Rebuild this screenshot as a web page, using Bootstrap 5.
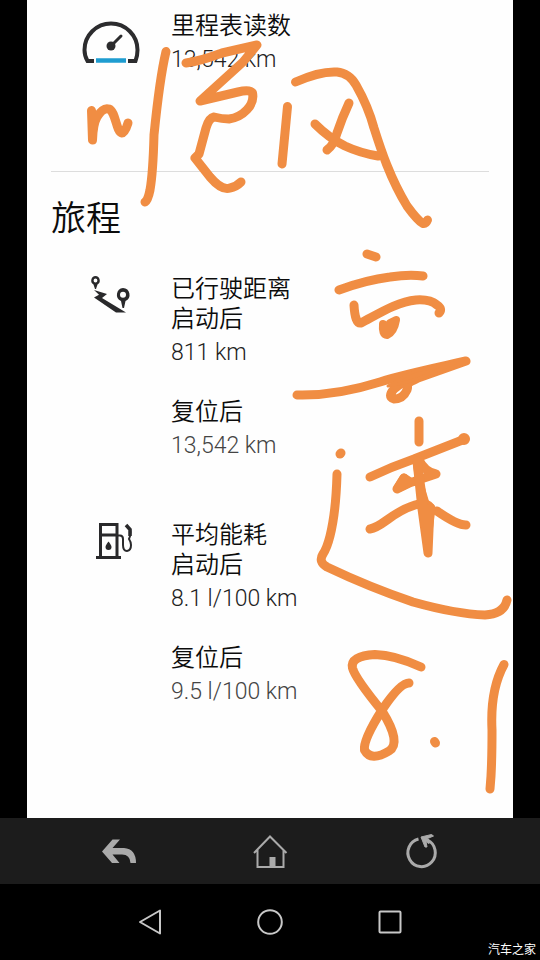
<!DOCTYPE html>
<html lang="zh-CN">
<head>
<meta charset="utf-8">
<meta name="viewport" content="width=device-width, initial-scale=1">
<title>旅程</title>
<link href="https://cdn.jsdelivr.net/npm/bootstrap@5.3.0/dist/css/bootstrap.min.css" rel="stylesheet">
<style>
  body { font-family: Roboto, "Noto Sans CJK SC", sans-serif; background: #000; color: #0c0c0c; }
  .screen { margin: 0 27px; padding: 11px 24px 0; background: #fefefe; }
  .icon-cell { width: 120px; }
  .label-text { font-size: 24px; line-height: 30px; font-weight: 350; }
  .value-text { font-size: 23px; line-height: 30px; font-weight: 300; margin-top: 4px; color: #222; }
  .value-total { color: #444; }
  .reading + .reading { margin-top: 29px; }
  .trip-item + .trip-item { margin-top: 59px; }
  .odometer { padding-bottom: 96px; border-bottom: 1px solid #ddd; }
  .section-title { font-size: 35px; line-height: 44px; font-weight: 350; margin: 26px 0 32px; }
  .ink { fill: none; stroke: #f08d43; stroke-width: 9; stroke-linecap: round; stroke-linejoin: round; pointer-events: none; }
  .tool-bar { background: #1c1c1c; height: 66px; padding: 0 43px; }
  .system-bar { height: 76px; padding: 0 90px; }
  .bar-btn { background: none; border: 0; padding: 0; color: #aaa; }
  .credit { right: 4px; bottom: 2px; font-size: 12px; line-height: 18px; color: #fff; font-family: "Noto Sans CJK SC", sans-serif; }
</style>
<script src="https://cdn.jsdelivr.net/npm/bootstrap@5.3.0/dist/js/bootstrap.bundle.min.js"></script>
</head>
<body>
<div class="d-flex flex-column min-vh-100">
  <main class="position-relative flex-grow-1 d-flex flex-column">
    <div class="screen flex-grow-1">
      <section class="odometer d-flex">
        <div class="icon-cell flex-shrink-0 text-center">
          <svg class="mt-2" width="58" height="46" viewBox="82 19 58 46" aria-hidden="true">
            <path d="M94 61H87.500Q84.500 56 84.500 50A26.500 26.500 0 0 1 137.500 50Q137.500 56 135.500 61H128" fill="none" stroke="#2c2c2e" stroke-width="4"/>
            <path d="M96 60.500H126" stroke="#1e9cd0" stroke-width="4.500"/>
            <path d="M111 46L121 36" stroke="#2c2c2e" stroke-width="3" stroke-linecap="round"/>
            <circle cx="111" cy="46" r="4.500" fill="#2c2c2e"/>
          </svg>
        </div>
        <div>
          <div class="label-text">里程表读数</div>
          <div class="value-text">13,542 km</div>
        </div>
      </section>
      <section>
        <h2 class="section-title">旅程</h2>
        <div class="trip-item d-flex">
          <div class="icon-cell flex-shrink-0 text-center">
            <svg width="42" height="40" viewBox="90 274 42 40" aria-hidden="true" fill="#29292b">
              <path fill-rule="evenodd" d="M95.500 276a4.500 4.500 0 0 1 2 8.400L96 289h-1l-1.500-4.600a4.500 4.500 0 0 1 2-8.400zm0 2.600a1.900 1.900 0 1 0 0 3.800 1.900 1.900 0 0 0 0-3.800z"/>
              <path fill-rule="evenodd" d="M123 288a6.800 6.800 0 0 1 2.500 13L124 308h-1.500L121 301a6.800 6.800 0 0 1 2-13zm0 3.800a3 3 0 1 0 0 6 3 3 0 0 0 0-6z"/>
              <path d="M94 290L107 294L102 298L126 312.500H116L94 297.500L99 294.800Z"/>
            </svg>
          </div>
          <div>
            <div class="reading">
              <div class="label-text">已行驶距离<br>启动后</div>
              <div class="value-text">811 km</div>
            </div>
            <div class="reading">
              <div class="label-text">复位后</div>
              <div class="value-text value-total">13,542 km</div>
            </div>
          </div>
        </div>
        <div class="trip-item d-flex">
          <div class="icon-cell flex-shrink-0 text-center">
            <svg class="ms-2" width="40" height="40" viewBox="95 520 40 40" aria-hidden="true" fill="none" stroke="#29292b">
              <path d="M100.500 557V524.500H117V557M100 535H117" stroke-width="3"/>
              <path d="M96 557.500H121" stroke-width="3"/>
              <path d="M117 535.500H120Q123 535.500 123 539V545Q123 551 127 551Q131 550.500 131 545Q131 542 129 539Q130.500 536 130.500 532L130 528" stroke-width="2"/>
              <path d="M126 525L130 529.500V536" stroke-width="3.500"/>
              <path d="M108.500 541.500C108.500 541.500 105.500 545 105.500 547A3 3 0 0 0 111.500 547C111.500 545 108.500 541.500 108.500 541.500Z" fill="#29292b" stroke="none"/>
            </svg>
          </div>
          <div>
            <div class="reading">
              <div class="label-text">平均能耗<br>启动后</div>
              <div class="value-text">8.1 l/100 km</div>
            </div>
            <div class="reading">
              <div class="label-text">复位后</div>
              <div class="value-text value-total">9.5 l/100 km</div>
            </div>
          </div>
        </div>
      </section>
    </div>
    <svg class="ink position-absolute top-0 start-0 w-100" viewBox="0 0 540 818" role="img" aria-label="手写批注">
      <path d="M91.500 110.500L92.500 140Q93 124 97 117Q103 107 109 109C116 112 116 132 122 133Q125 133 128 123"/>
      <path d="M166 51.500C160 77 157 105 154 135Q153 173 150 190Q148 200 145 202"/>
      <path d="M186 63C201 61 211 57 222 53L257 45L243 62L200 101L238 92Q250 89 252.500 93C255 105 243 117 229 119Q222 119 214 117Q209 118 206 128L199 154L195 158L210 177Q222 191 230 188Q236 187 241 182"/>
      <path d="M287.500 106.500L282 164"/>
      <path d="M295.500 82Q320 71 337 72Q349 73 356 85Q368 106 374 128C381 150 390 178 407 206Q418 221 423 223.500Q426 224 427.500 220"/>
      <path d="M349 103Q342 118 337 133Q334 145 327 150M315 124Q329 138 345 146Q360 153 378 156"/>
      <path d="M367 254L376 257M339 290Q366 280 390 277Q409 274 423 276"/>
      <path d="M354 305Q355 324 361 323C380 313 397 302 416 300Q430 299 437 305Q443 309 439 313"/>
      <path d="M383 324Q382 335 387 335Q394 332 396 320L390 323L388 331" stroke-width="8"/>
      <path d="M297 395Q336 396 380 382C405 374 440 367 466 361L418 378C400 387 410 382 407 390Q403 399 394 399Q387 397 394 389Q401 382 414 379"/>
      <path d="M388 386L415 371L455 363L417 379L407 382Z" fill="#f08d43" stroke-width="3"/>
      <path d="M419 421V442M370 477Q391 467 414 459Q442 448 465 439"/>
      <circle cx="464" cy="439" r="2" stroke-width="8"/>
      <path d="M404 478L397 489Q410 482 424 478L436 474Q425 472 419 460L417 461L422 509L428 553L430 507Q426 502 415 505Q402 509 387 520Q376 528 370 529M437 511Q457 525 466 525"/>
      <path d="M417 461L423 503L427 540L431 508M398 488L404 478L410 482Z" fill="#f08d43"/>
      <path d="M340 454L341 453"/>
      <path d="M337 474Q336 512 330 536Q327 548 323 554Q318 562 327 567Q369 587 413 602Q456 614 485 615Q504 614 507 600"/>
      <path d="M421 667Q395 655 375 654.500Q350 656 352.500 668Q355 678 382 711Q402 743 389 751Q371 762 364.500 750Q363 740 382 710Q400 683 409 683"/>
      <path d="M434.500 741.500L435.500 743"/>
      <path d="M504 664.500Q490 690 492 730Q492 758 491 776L490 789"/>
    </svg>
  </main>
  <nav class="tool-bar d-flex align-items-stretch" aria-label="工具栏">
    <button type="button" class="bar-btn flex-fill" aria-label="返回">
      <svg width="36" height="32" viewBox="101 835 36 32" fill="currentColor"><path d="M102 851.500L112.500 839.500H120L112.500 848H124Q136 849 136 863H130.500Q130 854.500 122 854.500H112.500L119.500 863H112Z"/></svg>
    </button>
    <button type="button" class="bar-btn flex-fill" aria-label="主页">
      <svg width="36" height="36" viewBox="252 833 36 36" fill="none" stroke="currentColor" stroke-width="2"><path d="M254 853L270 836.500L286.500 853M257.500 850V867H283.500V850"/><path d="M269.500 857H275.500V867H269.500Z" fill="currentColor" stroke="none"/></svg>
    </button>
    <button type="button" class="bar-btn flex-fill" aria-label="刷新">
      <svg width="36" height="38" viewBox="403 833 36 38" fill="none" stroke="currentColor" stroke-width="3"><path d="M418.500 840A13.700 14 0 1 0 427.500 841"/><path d="M421 838L431.500 835.500L433.500 837L427.500 839.500L431 843L428.500 844.500L426 842.500L427 848H425Z" fill="currentColor" stroke="currentColor" stroke-width="1"/></svg>
    </button>
  </nav>
  <nav class="system-bar d-flex align-items-stretch position-relative" aria-label="系统导航">
    <button type="button" class="bar-btn flex-fill" aria-label="后退">
      <svg width="28" height="28" viewBox="0 0 28 28" fill="none" stroke="#c8c8c8" stroke-width="2" stroke-linejoin="round"><path d="M4 14L24 2.500V25.500Z"/></svg>
    </button>
    <button type="button" class="bar-btn flex-fill" aria-label="主屏幕">
      <svg width="28" height="28" viewBox="0 0 28 28" fill="none" stroke="#c8c8c8" stroke-width="2"><circle cx="14" cy="14" r="11.800"/></svg>
    </button>
    <button type="button" class="bar-btn flex-fill" aria-label="最近任务">
      <svg width="28" height="28" viewBox="0 0 28 28" fill="none" stroke="#c8c8c8" stroke-width="2"><rect x="3.500" y="3.500" width="21" height="21" rx="1"/></svg>
    </button>
    <span class="credit position-absolute">汽车之家</span>
  </nav>
</div>
</body>
</html>
